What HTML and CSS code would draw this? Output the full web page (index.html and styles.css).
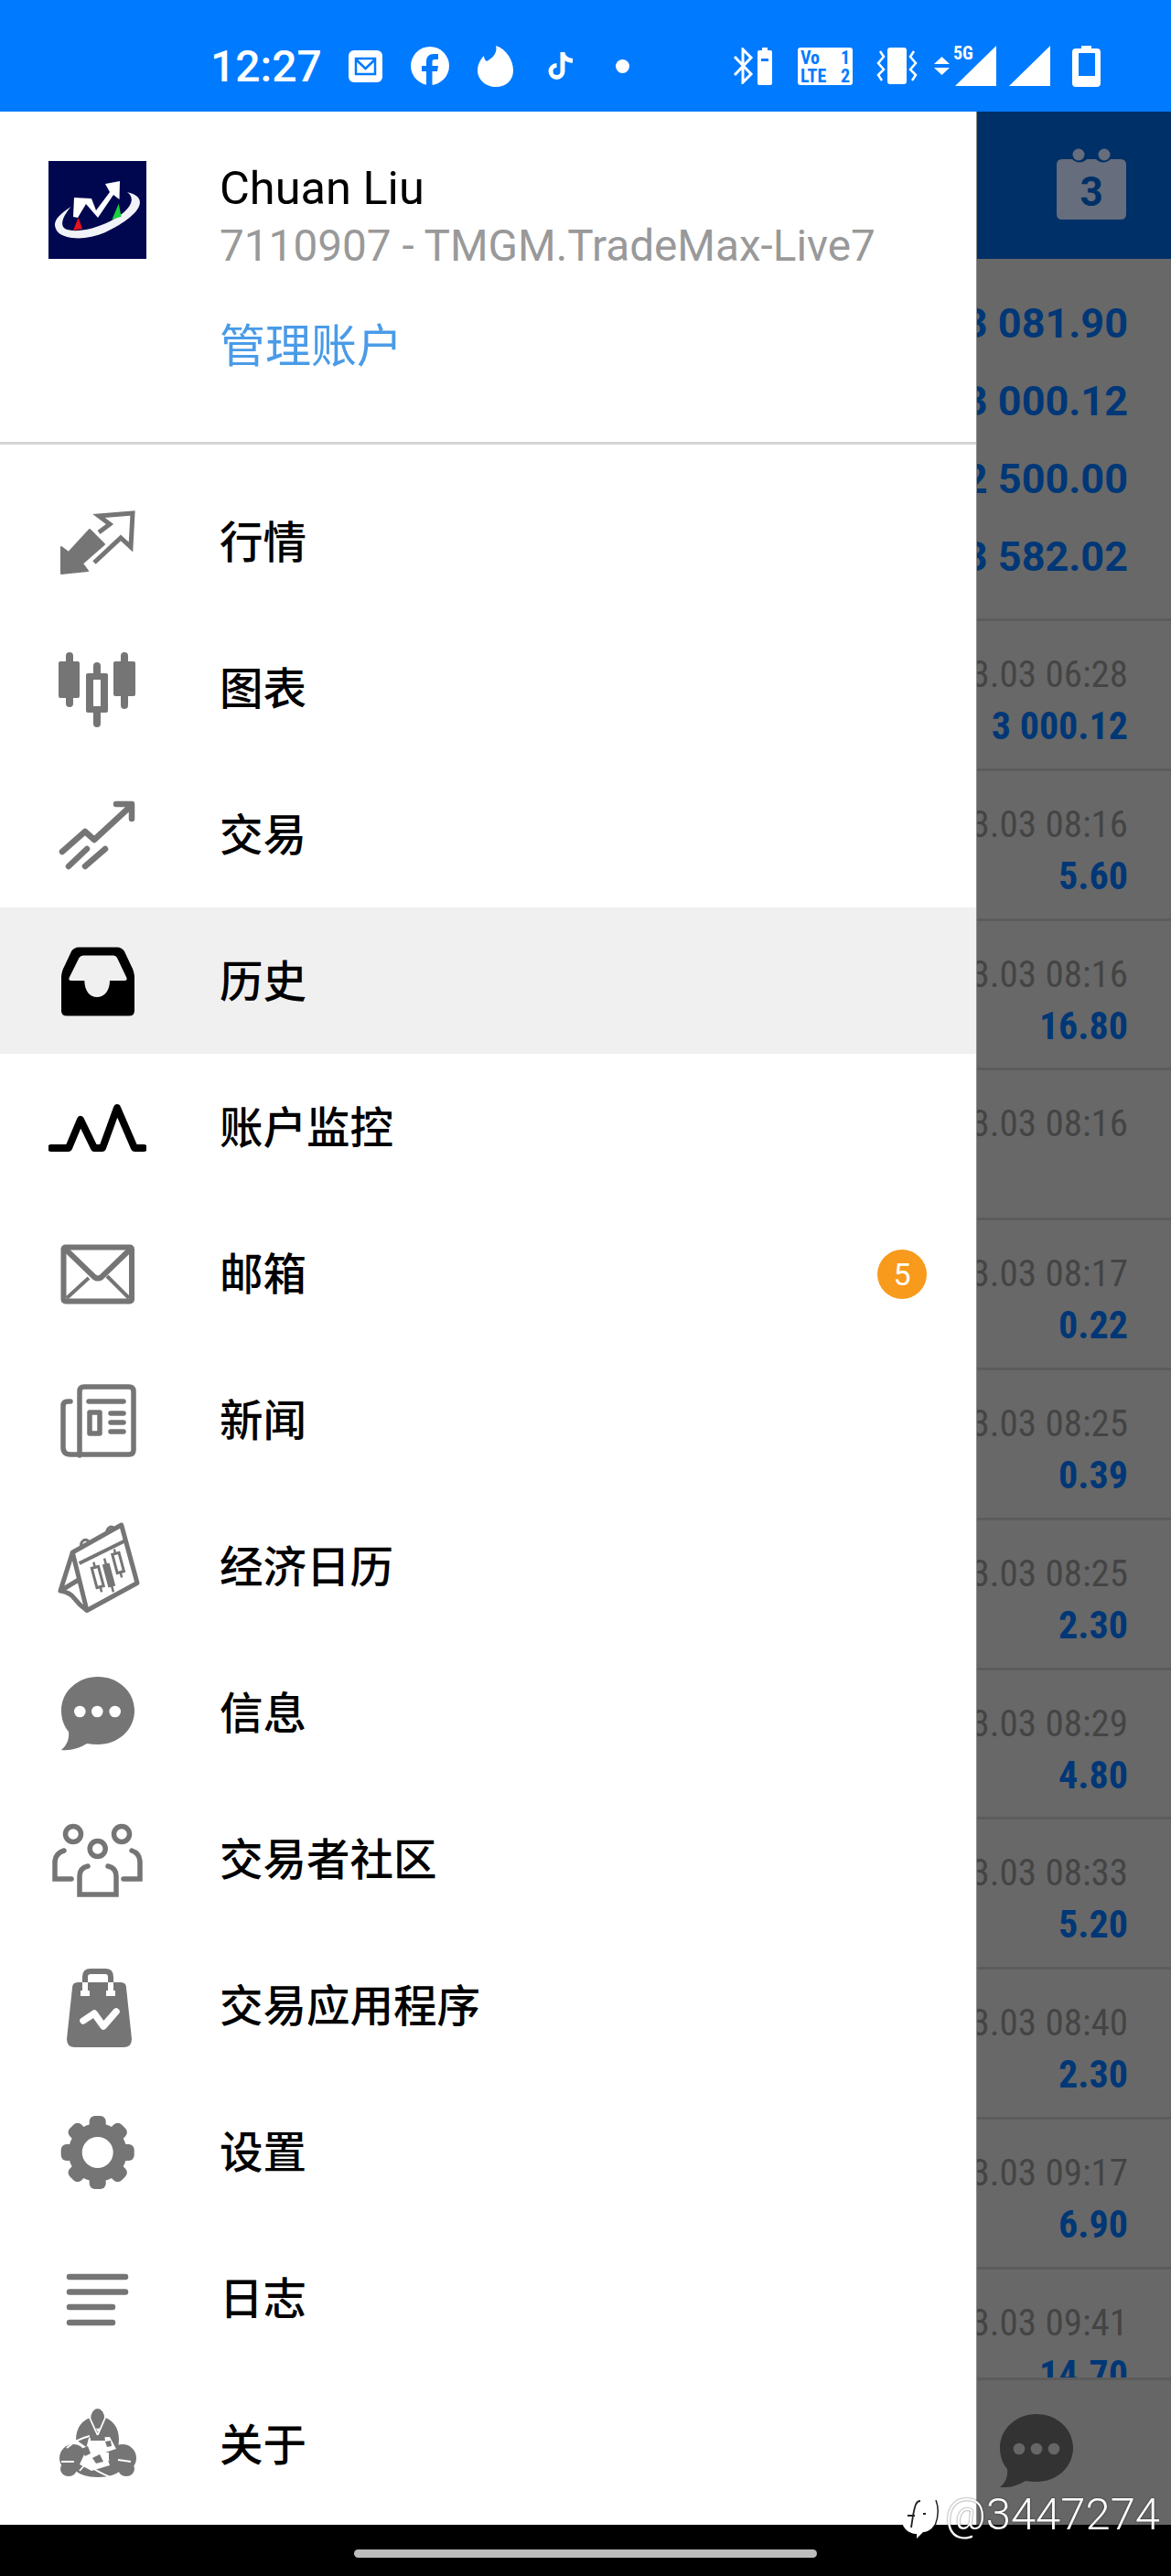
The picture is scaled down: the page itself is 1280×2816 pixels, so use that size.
FILE: index.html
```html
<!DOCTYPE html>
<html>
<head>
    <title>Menu</title>
    <link rel="stylesheet" href="styles.css">
</head>
<body>
    <div class="statusBar">
        <span class="clock">12:27</span>
        <svg class="st stMail" viewBox="0 0 37 35"><rect width="37" height="35" rx="6" fill="#fff"/><path d="M8 9H29V26H8ZM8 10L18.500 20L29 10" fill="none" stroke="#007aff" stroke-width="2.500"/></svg>
        <svg class="st stFb" viewBox="0 0 42 42"><circle cx="21" cy="21" r="21" fill="#fff"/><path d="M17 42V27H12V21H17V16C17 11 20 8 25 8H30V14H26C24 14 23.500 15 23.500 17V21H30L29 27H23.500V42Z" fill="#007aff"/></svg>
        <svg class="st stFlame" viewBox="0 0 39 45"><path d="M10 17C18 13 22 6 20 0C32 4 39 16 39 27C39 38 31 45 20 45C9 45 0 37 0 27C0 21 3 15 7 11C7 13 8 16 10 17Z" fill="#fff"/></svg>
        <svg class="st stTok" viewBox="0 0 28 32"><path d="M16 1V22A6.500 6.500 0 1 1 9.500 15.500M16 2C17 7 21 10 27 10.500" fill="none" stroke="#fff" stroke-width="5"/></svg>
        <span class="stDot"></span>
        <svg class="st stBt" viewBox="0 0 24 40"><path d="M2 10L20 29L11 38V2L20 11L2 30" fill="none" stroke="#fff" stroke-width="3"/></svg>
        <svg class="st stBtBat" viewBox="0 0 16 41"><path d="M5 0H11V3H14Q16 3 16 5V39Q16 41 14 41H2Q0 41 0 39V5Q0 3 2 3H5Z" fill="#fff"/><rect x="4" y="12" width="8" height="3" fill="#007aff"/></svg>
        <div class="volte">
            <div class="volteRow"><span>Vo</span><span>1</span></div>
            <div class="volteRow"><span>LTE</span><span>2</span></div>
        </div>
        <svg class="st stVib" viewBox="0 0 45 40"><rect x="12" width="21" height="40" rx="3" fill="#fff"/><path d="M4 4L8 10L2 17L8 24L2 30L6 36M41 4L37 10L43 17L37 24L43 30L39 36" fill="none" stroke="#fff" stroke-width="2.500"/></svg>
        <svg class="st stArrows" viewBox="0 0 17 20"><path d="M8.500 0L17 8H0ZM0 12H17L8.500 20Z" fill="#fff"/></svg>
        <div class="signal">
            <span class="fiveG">5G</span>
            <svg class="st stSig" viewBox="0 0 45 44"><path d="M45 0V44H0Z" fill="#fff"/></svg>
        </div>
        <svg class="st stSig stSig2" viewBox="0 0 45 44"><path d="M45 0V44H0Z" fill="#fff"/></svg>
        <svg class="st stBat" viewBox="0 0 31 45"><path d="M10 0H21V3H27Q31 3 31 7V41Q31 45 27 45H4Q0 45 0 41V7Q0 3 4 3H10Z" fill="#fff"/><rect x="7" y="8" width="18" height="25" fill="#007aff"/></svg>
    </div>

    <div class="screen">
        <div class="drawer">
            <div class="account">
                <svg class="logo" viewBox="0 0 107 107">
                    <rect width="107" height="107" fill="#00074f"/>
                    <path d="M24.500 50C12 58 4 66 8 74C12 86 40 88 62 78C88 66 106 50 98 40C96 37 90 35 86 34C94 40 92 48 80 58C60 73 30 80 18 74C12 70 16 60 24.500 50Z" fill="#f2f3f8"/>
                    <path d="M32.600 62L27 76L37 74Z" fill="#e8111c"/>
                    <path d="M76.700 46.700L69.400 64L79.600 60.700Z" fill="#19d23d"/>
                    <path d="M27 61L28 40L47 41L52 54L67 34L62 25L78 22L77.500 42L71 37L54 62L41 47L32 62Z" fill="#fff"/>
                </svg>
                <div class="accountText">
                    <div class="userName">Chuan Liu</div>
                    <div class="userServer">7110907 - TMGM.TradeMax-Live7</div>
                    <div class="manageLink">管理账户</div>
                </div>
            </div>

            <div class="menu">
                <div class="menuItem">
                    <svg class="menuIcon" viewBox="0 0 107 107"><path d="M14 59L14 88L43 85L37 77L61 56L45 40L22 65Z" fill="#757575" stroke="#757575" stroke-width="2" stroke-linejoin="round"/><path d="M55 43L67 34L55 25L92 22L90 59L79 49L50 76" fill="none" stroke="#757575" stroke-width="5"/></svg>
                    <span class="menuLabel">行情</span>
                </div>
                <div class="menuItem">
                    <svg class="menuIcon" viewBox="0 0 107 107"><g fill="#757575"><rect x="19" y="14" width="8" height="60" rx="4"/><rect x="11" y="24" width="23" height="40" rx="2"/><rect x="49" y="25" width="8" height="15" rx="4"/><rect x="49" y="76" width="8" height="20" rx="4"/><path fill-rule="evenodd" d="M43 37H63Q65 37 65 39V78Q65 80 63 80H43Q41 80 41 78V39Q41 37 43 37ZM49 44V73H57V44Z"/><rect x="79" y="14" width="8" height="62" rx="4"/><rect x="71" y="24" width="24" height="38" rx="2"/></g></svg>
                    <span class="menuLabel">图表</span>
                </div>
                <div class="menuItem">
                    <svg class="menuIcon" viewBox="0 0 107 107"><path d="M15 72L40 50L50 59L89 23M74 20H91V36M22 88L42 69M40 88L62 69" fill="none" stroke="#757575" stroke-width="6.500" stroke-linecap="round" stroke-linejoin="round"/></svg>
                    <span class="menuLabel">交易</span>
                </div>
                <div class="menuItem menuItemActive">
                    <svg class="menuIcon" viewBox="0 0 107 107"><path fill-rule="evenodd" d="M33 16.500H75Q80 16.500 83 21L90 36Q94 43 94 50V86Q94 91.500 88 91.500H20Q14 91.500 14 86V50Q14 43 18 36L25 21Q28 16.500 33 16.500ZM38 25.500Q35 25.500 33.500 28L23 49Q21 53 25 53H39.300C39.500 64 45 71 53 71C61 71 67 64 67 53H83Q87 53 85 49L75 28Q74 25.500 71 25.500Z" fill="#000"/></svg>
                    <span class="menuLabel">历史</span>
                </div>
                <div class="menuItem">
                    <svg class="menuIcon" viewBox="0 0 107 107"><path d="M3 76H22L35 45L50 76H59L75 32L94 76H104" fill="none" stroke="#000" stroke-width="8" stroke-linecap="round" stroke-linejoin="round"/></svg>
                    <span class="menuLabel">账户监控</span>
                </div>
                <div class="menuItem">
                    <svg class="menuIcon" viewBox="0 0 107 107"><rect x="16.500" y="24.500" width="74.500" height="59" rx="2" fill="none" stroke="#757575" stroke-width="6"/><path d="M18 26L50 57Q54 60 58 57L90 26" fill="none" stroke="#757575" stroke-width="6"/><path d="M20 80L44 58M64 56L88 80" fill="none" stroke="#757575" stroke-width="4"/></svg>
                    <span class="menuLabel">邮箱</span>
                    <span class="badge">5</span>
                </div>
                <div class="menuItem">
                    <svg class="menuIcon" viewBox="0 0 107 107"><path d="M34 92V22Q34 17 39 17H88Q93 17 93 22V86Q93 91 88 91H24Q16 91 16 83V38Q16 33 21 33H24M44 33H82M45 45H56V68H45ZM68 46H82M68 56H82M68 66H82" fill="none" stroke="#757575" stroke-width="5.500" stroke-linecap="round" stroke-linejoin="round"/></svg>
                    <span class="menuLabel">新闻</span>
                </div>
                <div class="menuItem">
                    <svg class="menuIcon" viewBox="0 0 107 107">
                        <g fill="none" stroke="#757575" stroke-width="5" stroke-linejoin="round">
                            <path d="M26.300 38L79.700 8L97 71.500L42 101.500Z"/>
                            <path d="M26.300 38L13 80Q24 82 28 88Q34 96 42 101.500"/>
                            <path d="M13 80L33 68"/>
                            <path d="M33.700 50L84.300 25" stroke-width="4"/>
                            <path d="M36 33C34 26 40 22 44 26M64 17C63 11 69 8 72 12" stroke-width="3"/>
                        </g>
                        <g transform="rotate(-15 53.700 65)"><path d="M53.700 48V82" stroke="#757575" stroke-width="2.500"/><rect x="50" y="54" width="7.500" height="22" fill="#fff" stroke="#757575" stroke-width="3"/></g>
                        <g transform="rotate(-15 66 63)"><path d="M66 44V82" stroke="#757575" stroke-width="2.500"/><rect x="62" y="50" width="8" height="26" fill="#757575"/></g>
                        <g transform="rotate(-15 76 50)"><path d="M76 34V66" stroke="#757575" stroke-width="2.500"/><rect x="72.500" y="39" width="7.500" height="21" fill="#fff" stroke="#757575" stroke-width="3"/></g>
                    </svg>
                    <span class="menuLabel">经济日历</span>
                </div>
                <div class="menuItem">
                    <svg class="menuIcon" viewBox="0 0 107 107"><path d="M54 14C76 14 94 30 94 51C94 72 76 88 54 88C50 88 46 87.500 42 87C34 92 24 95 14 94C20 89 23 82 22 74C17 68 14 60 14 51C14 30 32 14 54 14Z" fill="#757575"/><g fill="#fff"><circle cx="34.300" cy="52" r="6.300"/><circle cx="53.300" cy="52" r="6.300"/><circle cx="72.700" cy="52" r="6.300"/></g></svg>
                    <span class="menuLabel">信息</span>
                </div>
                <div class="menuItem">
                    <svg class="menuIcon" viewBox="0 0 107 107"><g fill="none" stroke="#757575" stroke-width="5.500"><circle cx="27" cy="26" r="8.500"/><circle cx="80" cy="26" r="8.500"/><circle cx="53.700" cy="42" r="8.500"/><path d="M17 44Q7 47 7 57V75H25" stroke-linecap="round"/><path d="M91 44Q100 47 100 57V75H82" stroke-linecap="round"/><path d="M43 61Q34 63 34 72V92H74V72Q74 63 65 61" stroke-linecap="round"/></g></svg>
                    <span class="menuLabel">交易者社区</span>
                </div>
                <div class="menuItem">
                    <svg class="menuIcon" viewBox="0 0 107 107"><path d="M32 28H79Q85 28 85 34L91 90Q91 99 82 99H29Q20 99 20 90L26 34Q26 28 32 28Z" fill="#757575"/><path d="M40 28V22Q40 16 46 16H62Q68 16 68 22V28" fill="none" stroke="#757575" stroke-width="6"/><path d="M40 28V40M68 28V40M35 40H45M63 40H73" fill="none" stroke="#fff" stroke-width="6"/><path d="M38 70L50 62L60 76L74 60" fill="none" stroke="#fff" stroke-width="7.500" stroke-linecap="round" stroke-linejoin="round"/></svg>
                    <span class="menuLabel">交易应用程序</span>
                </div>
                <div class="menuItem">
                    <svg class="menuIcon" viewBox="0 0 107 107"><g fill="#757575"><circle cx="53.700" cy="54" r="32"/><rect x="44.700" y="14" width="18" height="80" rx="6"/><rect x="44.700" y="14" width="18" height="80" rx="6" transform="rotate(45 53.700 54)"/><rect x="44.700" y="14" width="18" height="80" rx="6" transform="rotate(90 53.700 54)"/><rect x="44.700" y="14" width="18" height="80" rx="6" transform="rotate(135 53.700 54)"/></g><circle cx="53.700" cy="54" r="17" fill="#fff"/></svg>
                    <span class="menuLabel">设置</span>
                </div>
                <div class="menuItem">
                    <svg class="menuIcon" viewBox="0 0 107 107"><path d="M23 30H84M23 46.500H84M23 63H70M23 80H70" fill="none" stroke="#757575" stroke-width="6.500" stroke-linecap="round"/></svg>
                    <span class="menuLabel">日志</span>
                </div>
                <div class="menuItem">
                    <svg class="menuIcon" viewBox="0 0 107 107">
                        <g fill="#757575">
                            <path d="M30 48C30 34 38 26 46 24L54 40L62 24C70 27 77 34 77 48L76 62L62 62L44 58Z"/>
                            <ellipse cx="53.700" cy="25" rx="7.500" ry="11"/>
                            <circle cx="27" cy="68" r="15"/>
                            <circle cx="81" cy="68" r="15"/>
                            <path d="M28 80C36 92 72 92 80 80L64 70H44Z"/>
                            <ellipse cx="22" cy="80" rx="9" ry="8"/>
                            <ellipse cx="85" cy="80" rx="9" ry="8"/>
                        </g>
                        <g fill="none" stroke="#fff" stroke-width="1.800">
                            <path d="M45 24L53.700 43L62 24"/>
                            <path d="M20 57C28 50 36 46 45 44"/>
                            <path d="M34 82L48 66M44 76C52 82 60 86 68 89"/>
                            <path d="M76 70L90 72M14 72L28 72"/>
                        </g>
                        <path d="M44 46L67 45L74 58L62 62L67 76L47 82L34 75L40 62Z" fill="#fff"/>
                        <g fill="#757575">
                            <path d="M46 43H61L62 49H46Z"/>
                            <path d="M62 50L68 49L69 55L64 56Z"/>
                            <path d="M36 58L43 55L46 63L40 66Z"/>
                            <path d="M48 68L56 64L60 72L52 74Z"/>
                            <path d="M66 62L74 60L72 70L66 68Z"/>
                        </g>
                    </svg>
                    <span class="menuLabel">关于</span>
                </div>
            </div>
        </div>

        <div class="behind">
            <div class="behindHeader">
                <svg class="calIcon" viewBox="0 0 76 78"><path d="M6 12H17A11 11 0 0 0 33 12H43A11 11 0 0 0 59 12H70Q76 12 76 18V72Q76 78 70 78H6Q0 78 0 72V18Q0 12 6 12Z" fill="#666d7c"/><circle cx="24" cy="7" r="6.500" fill="#666d7c"/><circle cx="52" cy="7" r="6.500" fill="#666d7c"/><text x="38" y="63" text-anchor="middle" class="calDay">3</text></svg>
            </div>
            <div class="balances">
                <div>3 081.90</div>
                <div>3 000.12</div>
                <div>2 500.00</div>
                <div>3 582.02</div>
            </div>
            <div class="deals">
                <div class="deal"><div class="dealTime">3.03 06:28</div><div class="dealValue">3 000.12</div></div>
                <div class="deal"><div class="dealTime">3.03 08:16</div><div class="dealValue">5.60</div></div>
                <div class="deal"><div class="dealTime">3.03 08:16</div><div class="dealValue">16.80</div></div>
                <div class="deal"><div class="dealTime">3.03 08:16</div><div class="dealValue"></div></div>
                <div class="deal"><div class="dealTime">3.03 08:17</div><div class="dealValue">0.22</div></div>
                <div class="deal"><div class="dealTime">3.03 08:25</div><div class="dealValue">0.39</div></div>
                <div class="deal"><div class="dealTime">3.03 08:25</div><div class="dealValue">2.30</div></div>
                <div class="deal"><div class="dealTime">3.03 08:29</div><div class="dealValue">4.80</div></div>
                <div class="deal"><div class="dealTime">3.03 08:33</div><div class="dealValue">5.20</div></div>
                <div class="deal"><div class="dealTime">3.03 08:40</div><div class="dealValue">2.30</div></div>
                <div class="deal"><div class="dealTime">3.03 09:17</div><div class="dealValue">6.90</div></div>
                <div class="deal"><div class="dealTime">3.03 09:41</div><div class="dealValue">14.70</div></div>
            </div>
            <div class="behindFooter">
                <svg class="chatIcon" viewBox="0 0 80 80"><path d="M40 0C62 0 80 16 80 37C80 58 62 74 40 74C36 74 32 73.500 28 73C20 78 10 81 0 80C6 75 9 68 8 60C3 54 0 46 0 37C0 16 18 0 40 0Z" fill="#333"/><g fill="#666"><circle cx="21" cy="38" r="6.300"/><circle cx="40" cy="38" r="6.300"/><circle cx="59" cy="38" r="6.300"/></g></svg>
            </div>
        </div>
    </div>

    <div class="navBar"><div class="navPill"></div></div>

    <div class="watermark">
        <svg class="wmLogo" viewBox="0 0 44 44"><path d="M19 0C30 0 38 8 38 19C38 29 31 35 24 35L17 42L17 37C7 37 0 29 0 19C0 8 8 0 19 0Z" fill="#fff"/><path d="M21 1C16 1 15 7 13 17L11 30M7 17H15M24 15H27" fill="none" stroke="#222" stroke-width="1.800"/><path d="M38 0Q43 13 37 28" fill="none" stroke="#222" stroke-width="1.500"/></svg>
        <span>@3447274</span>
    </div>
</body>
</html>
```

FILE: styles.css
```css
* {
    box-sizing: border-box;
}
html, body {
    margin: 0;
    padding: 0;
}
body {
    position: relative;
    width: 1280px;
    height: 2816px;
    overflow: hidden;
    background: #fff;
    font-family: Roboto, "Noto Sans CJK SC", sans-serif;
}

/* status bar */
.statusBar {
    display: flex;
    align-items: center;
    height: 122px;
    padding: 22px 0 0 230px;
    background: #007aff;
    color: #fff;
}
.clock {
    width: 151px;
    font-size: 48px;
    font-weight: 500;
}
.st {
    display: block;
    flex: none;
}
.stMail { width: 37px; height: 35px; }
.stFb { width: 42px; height: 42px; margin-left: 31px; }
.stFlame { width: 39px; height: 45px; margin-left: 31px; }
.stTok { width: 28px; height: 32px; margin-left: 38px; }
.stDot {
    flex: none;
    width: 15px;
    height: 15px;
    margin-left: 46px;
    border-radius: 50%;
    background: #fff;
}
.stBt { width: 24px; height: 40px; margin-left: 113px; }
.stBtBat { width: 16px; height: 41px; margin-left: 3px; }
.volte {
    flex: none;
    width: 60px;
    height: 41px;
    margin-left: 28px;
    padding: 1px 3px 0;
    border-radius: 3px;
    background: #fff;
    color: #007aff;
    font-size: 20px;
    font-stretch: 75%;
    font-weight: 700;
    line-height: 20px;
}
.volteRow {
    display: flex;
    justify-content: space-between;
}
.stVib { width: 45px; height: 40px; margin-left: 26px; }
.stArrows { width: 17px; height: 20px; margin-left: 18px; }
.signal {
    position: relative;
    flex: none;
    width: 45px;
    height: 44px;
    margin-left: 6px;
}
.stSig { width: 45px; height: 44px; }
.stSig2 { margin-left: 14px; }
.fiveG {
    position: absolute;
    top: -4px;
    left: -2px;
    font-size: 20px;
    font-stretch: 75%;
    font-weight: 700;
}
.stBat { width: 31px; height: 45px; margin-left: 24px; }

/* page under the status bar */
.screen {
    display: flex;
    height: 2638px;
}
.drawer {
    flex: none;
    width: 1067px;
    background: #fff;
}
.account {
    display: flex;
    height: 364px;
    padding: 54px 0 0 53px;
    border-bottom: 3px solid #d4d4d4;
}
.logo {
    flex: none;
    width: 107px;
    height: 107px;
}
.accountText {
    margin-left: 80px;
}
.userName {
    margin-top: -1px;
    font-size: 50.500px;
    line-height: 62px;
    color: #000;
}
.userServer {
    margin-top: 4px;
    font-size: 47.700px;
    line-height: 56px;
    color: #999;
}
.manageLink {
    margin-top: 49px;
    font-size: 50px;
    line-height: 66px;
    color: #4a9be8;
}
.menu {
    padding-top: 26px;
}
.menuItem {
    display: flex;
    align-items: center;
    height: 160px;
    padding: 0 54px 0 53px;
    font-size: 47.500px;
    font-weight: 500;
    color: #000;
}
.menuItemActive {
    background: #f0f0f0;
}
.menuIcon {
    flex: none;
    width: 107px;
    height: 107px;
    margin-right: 80px;
}
.menuLabel {
    margin-top: -5px;
}
.badge {
    width: 54px;
    height: 54px;
    margin: 2px 0 0 auto;
    border-radius: 50%;
    background: #f89a1c;
    color: #fff;
    font-size: 34px;
    font-weight: 400;
    line-height: 54px;
    text-align: center;
}

/* dimmed page behind the drawer */
.behind {
    display: flex;
    flex-direction: column;
    flex: none;
    width: 213px;
    overflow: hidden;
    background: #686868;
    border-left: 1px solid #8a8a8a;
}
.behindHeader {
    display: flex;
    justify-content: flex-end;
    flex: none;
    height: 161px;
    padding: 40px 49px 0 0;
    background: #003068;
}
.calIcon {
    flex: none;
    width: 76px;
    height: 78px;
}
.calDay {
    font-family: Roboto, sans-serif;
    font-size: 44px;
    font-weight: 700;
    fill: #003068;
}
.balances {
    flex: none;
    height: 396px;
    padding: 28px 47px 0 0;
    border-bottom: 3px solid #5c5c5c;
    color: #003776;
    font-size: 45px;
    font-weight: 700;
    line-height: 85px;
    white-space: nowrap;
}
.balances > div {
    display: flex;
    justify-content: flex-end;
}
.deals {
    flex: none;
    height: 1920px;
    overflow: hidden;
}
.deal {
    display: flex;
    flex-direction: column;
    align-items: flex-end;
    height: 163.800px;
    padding: 32px 47px 0 0;
    border-bottom: 3px solid #5c5c5c;
    white-space: nowrap;
}
.dealTime {
    height: 52px;
    color: #444;
    font-size: 41px;
    font-stretch: 75%;
    line-height: 52px;
}
.dealValue {
    height: 58px;
    color: #003776;
    font-size: 42px;
    font-stretch: 75%;
    font-weight: 700;
    line-height: 62px;
}
.behindFooter {
    flex: 1;
    padding: 37px 0 0 25px;
    border-top: 3px solid #5c5c5c;
    background: #666;
}
.chatIcon {
    display: block;
    width: 80px;
    height: 80px;
}
.navBar {
    display: flex;
    justify-content: center;
    align-items: flex-end;
    height: 56px;
    padding-bottom: 20px;
    background: #000;
}
.navPill {
    width: 506px;
    height: 9px;
    border-radius: 5px;
    background: #bdbdbd;
}

/* site watermark over the corner */
.watermark {
    position: absolute;
    top: 2719px;
    left: 985px;
    display: flex;
    align-items: flex-start;
    color: #fff;
    font-size: 49px;
    font-weight: 300;
    line-height: 60px;
    text-shadow: 0 0 2px rgba(0, 0, 0, 0.7);
}
.wmLogo {
    flex: none;
    width: 44px;
    height: 44px;
    margin: 14px 4px 0 0;
}
```
